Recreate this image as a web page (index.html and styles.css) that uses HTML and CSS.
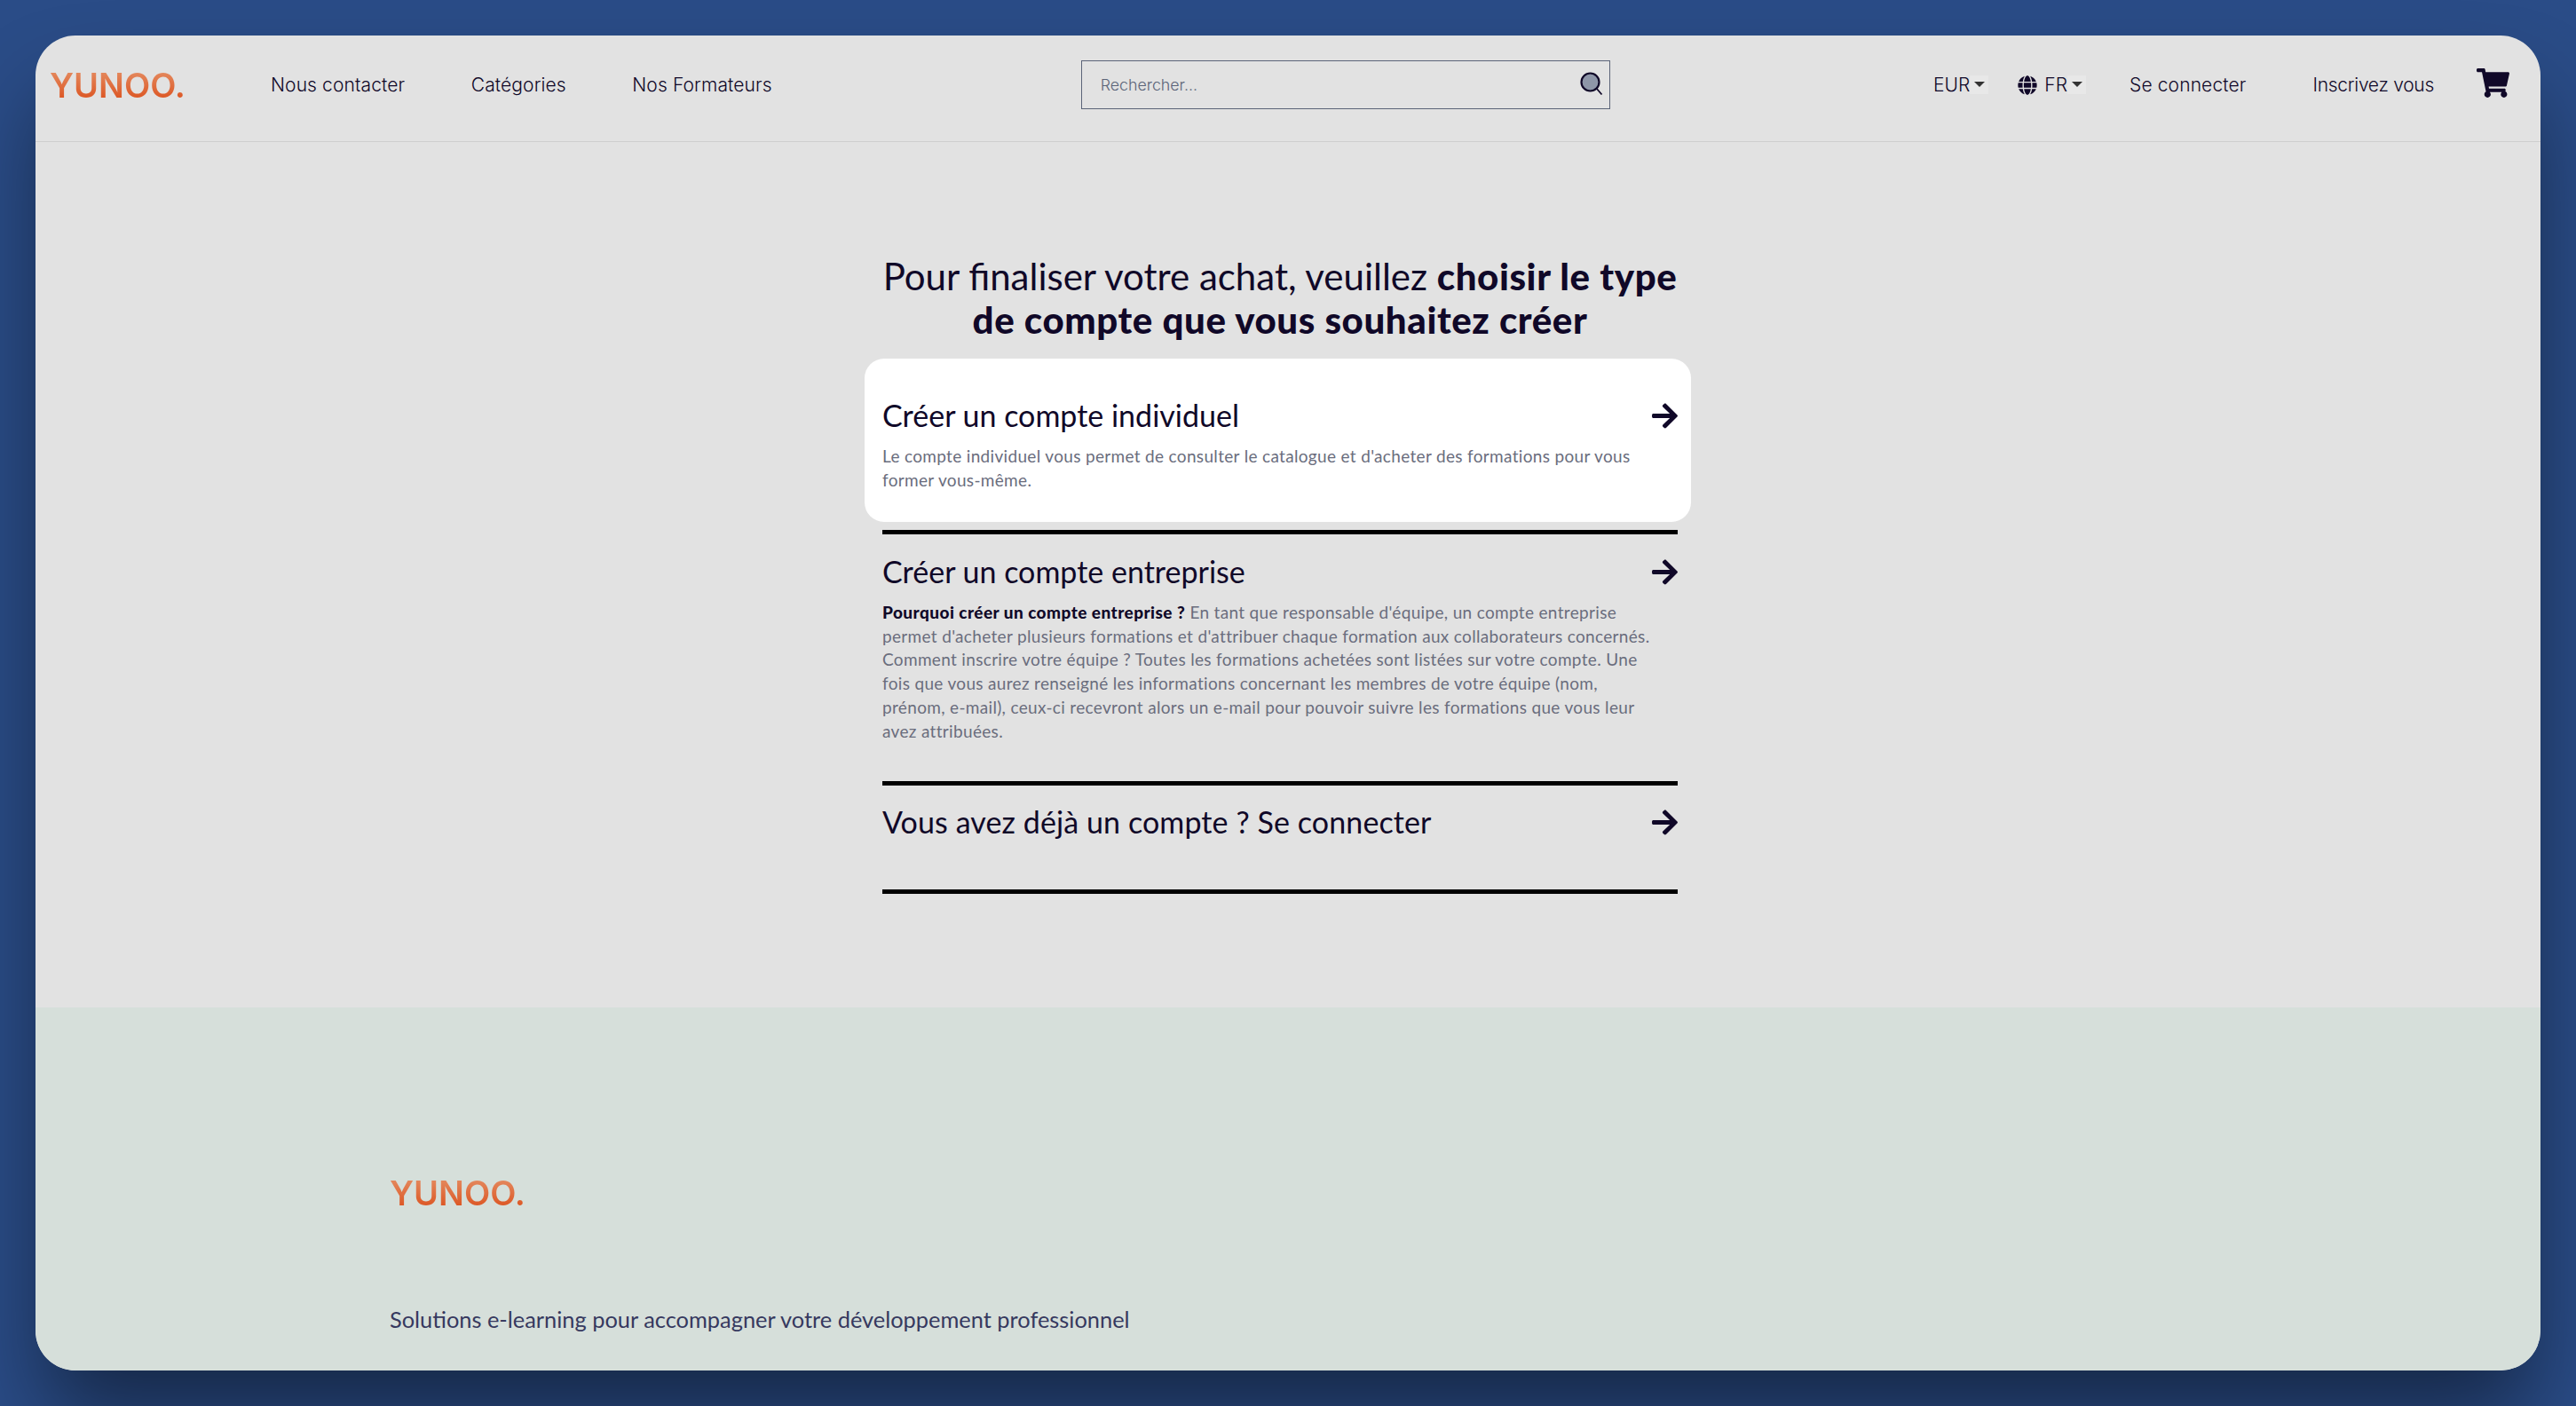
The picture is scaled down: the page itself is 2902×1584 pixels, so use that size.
FILE: index.html
```html
<!DOCTYPE html>
<html lang="fr">
<head>
<meta charset="utf-8">
<title>YUNOO</title>
<link rel="stylesheet" href="styles.css">
</head>
<body>
<div class="window">
  <header class="topbar">
    <a class="logo">YUNOO.</a>
    <nav class="nav">
      <a class="nav-link">Nous contacter</a>
      <a class="nav-link">Catégories</a>
      <a class="nav-link">Nos Formateurs</a>
    </nav>
    <div class="search">
      <span class="placeholder">Rechercher...</span>
      <svg class="search-icon" viewBox="0 0 26 26"><circle cx="11.5" cy="11" r="10" fill="#8e96a8" stroke="#100828" stroke-width="2.2"/><path d="M18.5 18l6 7" stroke="#100828" stroke-width="1.8" fill="none"/></svg>
    </div>
    <div class="tools">
      <div class="select select-eur"><span>EUR</span><i class="caret"></i></div>
      <div class="select select-lang">
        <svg class="globe" viewBox="0 0 496 512"><path fill="#100828" d="M336.5 160C322 70.7 287.8 8 248 8s-74 62.7-88.5 152h177zM152 256c0 22.2 1.2 43.5 3.3 64h185.3c2.1-20.5 3.3-41.8 3.3-64s-1.2-43.5-3.3-64H155.3c-2.1 20.5-3.3 41.8-3.3 64zm324.7-96c-28.6-67.9-86.5-120.4-158-141.6 24.4 33.8 41.2 84.7 50 141.6h108zM177.2 18.4C105.8 39.6 47.8 92.1 19.3 160h108c8.7-56.9 25.5-107.8 49.9-141.6zM487.4 192H372.7c2.1 21 3.3 42.5 3.3 64s-1.2 43-3.3 64h114.6c5.5-20.5 8.6-41.8 8.6-64s-3.1-43.5-8.5-64zM120 256c0-21.5 1.2-43 3.3-64H8.6C3.2 212.5 0 233.8 0 256s3.2 43.5 8.6 64h114.6c-2-21-3.2-42.5-3.2-64zm39.5 96c14.5 89.3 48.7 152 88.5 152s74-62.7 88.5-152h-177zm159.3 141.6c71.4-21.2 129.4-73.7 158-141.6h-108c-8.8 56.9-25.6 107.8-50 141.6zM19.3 352c28.6 67.9 86.5 120.4 158 141.6-24.4-33.8-41.2-84.7-50-141.6h-108z"/></svg>
        <span>FR</span><i class="caret"></i>
      </div>
      <a class="nav-link login">Se connecter</a>
      <a class="nav-link signup">Inscrivez vous</a>
      <svg class="cart" viewBox="0 0 576 512"><path fill="#100828" d="M528.12 301.319l47.273-208C578.806 78.301 567.391 64 551.99 64H159.208l-9.166-44.81C147.758 8.021 137.93 0 126.529 0H24C10.745 0 0 10.745 0 24v16c0 13.255 10.745 24 24 24h69.883l70.248 343.435C147.325 417.1 136 435.222 136 456c0 30.928 25.072 56 56 56s56-25.072 56-56c0-15.674-6.447-29.835-16.824-40h209.647C430.447 426.165 424 440.326 424 456c0 30.928 25.072 56 56 56s56-25.072 56-56c0-22.172-12.888-41.332-31.579-50.405l5.517-24.276c3.413-15.018-8.002-29.319-23.403-29.319H218.117l-6.545-32h293.145c11.206 0 20.92-7.754 23.403-18.681z"/></svg>
    </div>
  </header>

  <main class="main">
    <div class="column">
      <h1 class="heading">Pour finaliser votre achat, veuillez <b>choisir le type<br>de compte que vous souhaitez créer</b></h1>

      <section class="card">
        <div class="title-row">
          <h2 class="title">Créer un compte individuel</h2>
          <svg class="arrow" viewBox="0 0 448 512"><path d="M190.5 66.9l22.2-22.2c9.4-9.4 24.6-9.4 33.9 0L441 239c9.4 9.4 9.4 24.6 0 33.9L246.6 467.3c-9.4 9.4-24.6 9.4-33.9 0l-22.2-22.2c-9.5-9.5-9.3-25 .4-34.3L311.4 296H24c-13.3 0-24-10.7-24-24v-32c0-13.3 10.7-24 24-24h287.4L190.9 101.2c-9.8-9.3-10-24.8-.4-34.3z"/></svg>
        </div>
        <p class="desc desc-card">Le compte individuel vous permet de consulter le catalogue et d'acheter des formations pour vous<br>former vous-même.</p>
      </section>

      <hr class="rule rule-first">

      <section class="option option-company">
        <div class="title-row">
          <h2 class="title">Créer un compte entreprise</h2>
          <svg class="arrow" viewBox="0 0 448 512"><path d="M190.5 66.9l22.2-22.2c9.4-9.4 24.6-9.4 33.9 0L441 239c9.4 9.4 9.4 24.6 0 33.9L246.6 467.3c-9.4 9.4-24.6 9.4-33.9 0l-22.2-22.2c-9.5-9.5-9.3-25 .4-34.3L311.4 296H24c-13.3 0-24-10.7-24-24v-32c0-13.3 10.7-24 24-24h287.4L190.9 101.2c-9.8-9.3-10-24.8-.4-34.3z"/></svg>
        </div>
        <p class="desc"><b>Pourquoi créer un compte entreprise ?</b> En tant que responsable d'équipe, un compte entreprise<br>permet d'acheter plusieurs formations et d'attribuer chaque formation aux collaborateurs concernés.<br>Comment inscrire votre équipe ? Toutes les formations achetées sont listées sur votre compte. Une<br>fois que vous aurez renseigné les informations concernant les membres de votre équipe (nom,<br>prénom, e-mail), ceux-ci recevront alors un e-mail pour pouvoir suivre les formations que vous leur<br>avez attribuées.</p>
      </section>

      <hr class="rule">

      <section class="option option-login">
        <div class="title-row">
          <h2 class="title">Vous avez déjà un compte ? Se connecter</h2>
          <svg class="arrow" viewBox="0 0 448 512"><path d="M190.5 66.9l22.2-22.2c9.4-9.4 24.6-9.4 33.9 0L441 239c9.4 9.4 9.4 24.6 0 33.9L246.6 467.3c-9.4 9.4-24.6 9.4-33.9 0l-22.2-22.2c-9.5-9.5-9.3-25 .4-34.3L311.4 296H24c-13.3 0-24-10.7-24-24v-32c0-13.3 10.7-24 24-24h287.4L190.9 101.2c-9.8-9.3-10-24.8-.4-34.3z"/></svg>
        </div>
      </section>

      <hr class="rule">
    </div>
  </main>

  <footer class="footer">
    <a class="logo">YUNOO.</a>
    <p class="tagline">Solutions e-learning pour accompagner votre développement professionnel</p>
  </footer>
</div>
</body>
</html>
```

FILE: styles.css
```css
* { box-sizing: border-box; }
html, body { margin: 0; height: 100%; }
body {
  padding: 40px;
  height: 1584px;
  overflow: hidden;
  background: #2a4c87;
  font-family: "Lato", "Liberation Sans", sans-serif;
  color: #100828;
}
.window {
  height: 1504px;
  display: flex;
  flex-direction: column;
  background: #e2e2e2;
  border-radius: 45px;
  overflow: hidden;
  box-shadow: 0 60px 100px -10px rgba(0, 0, 0, .48);
}
.topbar {
  height: 120px;
  flex: none;
  display: flex;
  align-items: center;
  padding: 0 35px 8px 16px;
  border-bottom: 1px solid #cfcfcf;
}
.logo {
  font-family: "Inter", sans-serif;
  font-weight: 600;
  font-size: 38px;
  line-height: 46px;
  background: linear-gradient(180deg, #e48a5f 15%, #dc5522 85%);
  -webkit-background-clip: text;
  background-clip: text;
  color: transparent;
  display: block;
  width: 155px;
}
.nav { display: flex; gap: 74.5px; margin-left: 94px; }
.nav-link {
  font-family: "Inter", sans-serif;
  font-weight: 300;
  font-size: 21px;
  line-height: 28px;
  letter-spacing: .12px;
  color: #100828;
  white-space: nowrap;
}
.search {
  position: relative;
  width: 596px;
  height: 55px;
  margin-left: 348px;
  border: 1px solid #5b6478;
  display: flex;
  align-items: center;
  justify-content: space-between;
  padding: 0 7px 0 21px;
}
.placeholder { font-family: "Inter", sans-serif; font-weight: 300; font-size: 17.8px; color: #5b6478; }
.search-icon { width: 26px; height: 27px; margin-bottom: 3px; }
.tools { display: flex; align-items: center; margin-left: auto; }
.select { display: flex; align-items: center; font-family: "Inter", sans-serif; font-weight: 300; font-size: 21px; }
.caret {
  display: flex;
  width: 21px;
  height: 21px;
  background: #e8e8e8;
  position: relative;
}
.caret::after {
  content: "";
  margin: 7px auto 0;
  border-left: 6px solid transparent;
  border-right: 6px solid transparent;
  border-top: 6px solid #333;
  height: 0;
  width: 0;
}
.select-lang { margin-left: 33px; }
.globe { width: 22px; height: 22px; margin-right: 8px; }
.login { margin-left: 49px; }
.signup { margin-left: 75px; letter-spacing: -.28px; }
.cart { width: 37px; height: 33px; margin-left: 48px; margin-bottom: 5px; }

.main { flex: 1; min-height: 0; }
.column { width: 896px; margin-left: 954px; padding-top: 127px; }
.heading {
  margin: 0 0 19px;
  font-size: 42px;
  line-height: 49px;
  font-weight: 400;
  text-align: center;
  white-space: nowrap;
}
.heading b { font-weight: 900; letter-spacing: .6px; }
.title-row { display: flex; justify-content: space-between; align-items: center; }
.title { margin: 0; font-size: 34px; line-height: 40px; font-weight: 400; }
.arrow { width: 29px; height: 33px; fill: #100828; }
.card {
  margin: 0 -15px 0 -20px;
  height: 184px;
  padding: 44px 15px 0 20px;
  background: #fff;
  border-radius: 22px;
}
.desc { margin: 0; font-size: 19px; line-height: 26.7px; font-weight: 400; letter-spacing: .33px; color: #6a6d7d; white-space: nowrap; }
.desc b { color: #100828; font-weight: 900; letter-spacing: .45px; }
.desc-card { margin-top: 13px; }
.rule { margin: 0; height: 5px; border: 0; background: #000; }
.rule-first { margin-top: 9px; }
.option-company { padding: 22px 0 43px; }
.option-company .desc { margin-top: 13px; }
.option-login { padding: 21px 0 56px; }
.option-login .title { letter-spacing: .1px; }

.footer {
  height: 409px;
  flex: none;
  background: #d6dfda;
  padding: 186px 0 0 399px;
}
.tagline {
  margin: 102px 0 0;
  font-size: 25.4px;
  line-height: 34px;
  font-weight: 400;
  color: #36395f;
}
```
